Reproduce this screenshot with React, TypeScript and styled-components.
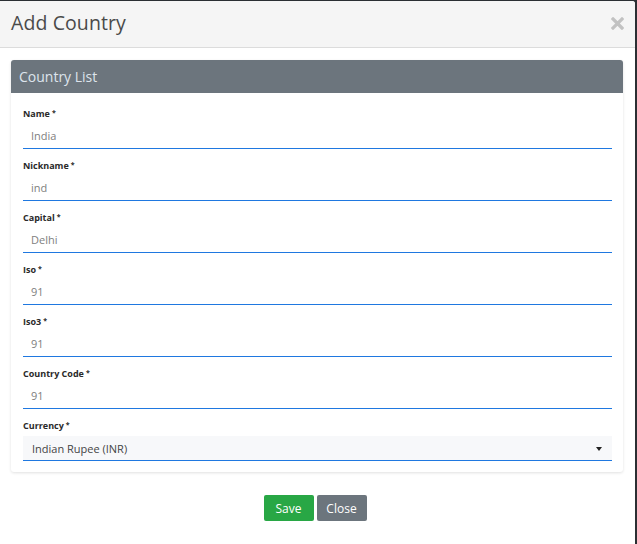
import React from 'react';
import styled, { createGlobalStyle } from 'styled-components';

const GlobalStyle = createGlobalStyle`
  html, body {
    margin: 0;
    padding: 0;
    background: #2b2f33;
    font-family: "Open Sans", "Noto Sans", sans-serif;
  }
  * { box-sizing: border-box; }
`;

type Field = { label: string; value: string };

const fields: Field[] = [
  { label: 'Name', value: 'India' },
  { label: 'Nickname', value: 'ind' },
  { label: 'Capital', value: 'Delhi' },
  { label: 'Iso', value: '91' },
  { label: 'Iso3', value: '91' },
  { label: 'Country Code', value: '91' },
];

const Modal = styled.div`
  width: 635px;
  height: 543px;
  margin-top: 1px;
  background: #fff;
  border-top-right-radius: 3px;
  display: flex;
  flex-direction: column;
`;

const Header = styled.div`
  height: 47px;
  background: #f5f5f5;
  border-bottom: 1px solid #dcdcdc;
  display: flex;
  align-items: center;
  justify-content: space-between;
  padding: 0 11px 3px 11px;
  border-top-right-radius: 3px;
`;

const Title = styled.h4`
  margin: 0;
  font-size: 19.5px;
  font-weight: 400;
  color: #4a4a4a;
  letter-spacing: 0.1px;
`;

const CloseX = styled.button`
  border: 0;
  background: none;
  padding: 0;
  margin: 2px 0 0 0;
  display: flex;
  cursor: pointer;
`;

const Body = styled.div`
  padding: 12px 12px 0 11px;
`;

const Card = styled.div`
  background: #fff;
  border-radius: 3px;
  box-shadow: 0 1px 3px rgba(0, 0, 0, 0.12);
`;

const CardHeader = styled.div`
  height: 33px;
  background: #6c757d;
  color: #dde4ec;
  font-size: 14px;
  display: flex;
  align-items: center;
  padding: 0 8px;
  border-radius: 3px 3px 0 0;
`;

const CardBody = styled.div`
  padding: 13px 11px 11px 12px;
`;

const Group = styled.div`
  margin-bottom: 9px;
  &:last-child { margin-bottom: 0; }
`;

const Label = styled.label`
  display: block;
  height: 14px;
  line-height: 14px;
  font-size: 9px;
  font-weight: 700;
  color: #2a2a2a;
  margin-bottom: 1px;
  sup {
    font-size: 7px;
    margin-left: 2px;
    vertical-align: 2px;
  }
`;

const Input = styled.div<{ $filled?: boolean }>`
  height: 28px;
  border-bottom: 1px solid #1f78e0;
  background: ${(p) => (p.$filled ? '#f7f8fa' : 'transparent')};
  display: flex;
  align-items: center;
  justify-content: space-between;
  padding: 1px 10px 0 8px;
  font-size: 11px;
  color: ${(p) => (p.$filled ? '#444' : '#808080')};
`;

const SelectBox = styled(Input)`
  height: 25px;
  margin-top: 4px;
  padding-left: 9px;
`;

const Caret = styled.span`
  width: 0;
  height: 0;
  border-left: 3px solid transparent;
  border-right: 3px solid transparent;
  border-top: 4px solid #222;
`;

const Footer = styled.div`
  display: flex;
  justify-content: center;
  gap: 3px;
  padding-top: 23px;
  padding-right: 4px;
`;

const Button = styled.button<{ $variant: 'save' | 'close' }>`
  width: 50px;
  height: 26px;
  border: 0;
  border-radius: 2px;
  color: #fff;
  font-family: inherit;
  font-size: 12px;
  background: ${(p) => (p.$variant === 'save' ? '#28a745' : '#6c757d')};
  cursor: pointer;
`;

export default function App() {
  return (
    <>
      <GlobalStyle />
      <Modal>
        <Header>
          <Title>Add Country</Title>
          <CloseX aria-label="close">
            <svg width="13" height="13" viewBox="0 0 13 13">
              <path d="M2 2 L11 11 M11 2 L2 11" stroke="#c2c2c2" strokeWidth="3.2" strokeLinecap="square" />
            </svg>
          </CloseX>
        </Header>
        <Body>
          <Card>
            <CardHeader>Country List</CardHeader>
            <CardBody>
              {fields.map((f) => (
                <Group key={f.label}>
                  <Label>
                    {f.label}
                    <sup>*</sup>
                  </Label>
                  <Input>{f.value}</Input>
                </Group>
              ))}
              <Group>
                <Label>
                  Currency<sup>*</sup>
                </Label>
                <SelectBox $filled>
                  Indian Rupee (INR)
                  <Caret />
                </SelectBox>
              </Group>
            </CardBody>
          </Card>
          <Footer>
            <Button $variant="save">Save</Button>
            <Button $variant="close">Close</Button>
          </Footer>
        </Body>
      </Modal>
    </>
  );
}
